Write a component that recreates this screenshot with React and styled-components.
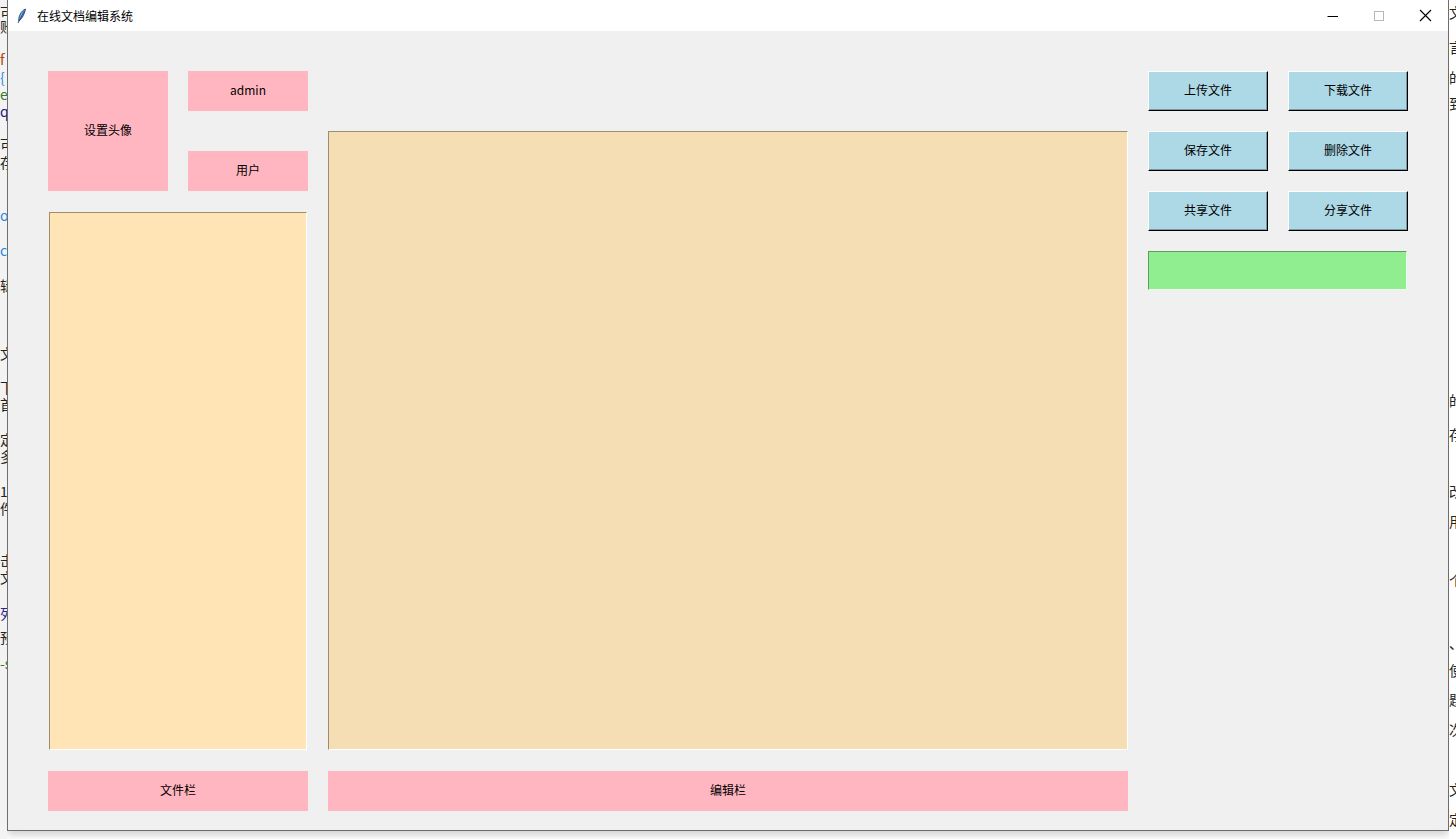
import React from "react";
import styled, { createGlobalStyle } from "styled-components";

const Global = createGlobalStyle`
  html, body { margin: 0; padding: 0; background: #ffffff; }
  body { font-family: "Noto Sans CJK SC", "Noto Sans", sans-serif; }
  #root { width: 1456px; height: 839px; overflow: hidden; }
`;

const Desktop = styled.div`
  display: flex;
  width: 1456px;
  height: 839px;
  background: #ffffff;
`;

const SideStrip = styled.div`
  width: ${(p) => p.$w}px;
  flex-shrink: 0;
  height: 839px;
  overflow: hidden;
  background: ${(p) => p.$bg};
  position: relative;
  font-family: "Noto Sans CJK SC", sans-serif;
  font-size: 14px;
  line-height: 14px;
`;

const Glyph = styled.div`
  position: absolute;
  left: ${(p) => p.$x}px;
  top: ${(p) => p.$y}px;
  color: ${(p) => p.$c || "#222"};
  white-space: nowrap;
`;

const Window = styled.div`
  width: 1440px;
  height: 830px;
  flex-shrink: 0;
  border: 1px solid #6e6e6e;
  border-top: none;
  display: flex;
  flex-direction: column;
  background: #f0f0f0;
  box-shadow: 0 4px 8px rgba(0, 0, 0, 0.18);
`;

const TitleBar = styled.div`
  height: 31px;
  background: #ffffff;
  display: flex;
  align-items: center;
  flex-shrink: 0;
`;

const TitleIcon = styled.div`
  width: 20px;
  padding-left: 9px;
  display: flex;
  align-items: center;
`;

const TitleText = styled.div`
  font-size: 12px;
  line-height: 1;
  color: #000;
  flex: 1;
`;

const Controls = styled.div`
  display: flex;
  height: 31px;
`;

const CtrlBtn = styled.div`
  width: 46px;
  height: 31px;
  display: flex;
  align-items: center;
  justify-content: center;
`;

const Content = styled.div`
  flex: 1;
  display: flex;
  padding: 40px 0 0 40px;
  gap: 20px;
`;

const Column = styled.div`
  display: flex;
  flex-direction: column;
  width: ${(p) => p.$w}px;
`;

const TopRow = styled.div`
  display: flex;
  gap: 20px;
`;

const Stack = styled.div`
  display: flex;
  flex-direction: column;
  gap: 40px;
`;

const PinkLabel = styled.div`
  width: ${(p) => p.$w}px;
  height: ${(p) => p.$h}px;
  box-sizing: border-box;
  padding-bottom: 2px;
  background: #ffb6c1;
  display: flex;
  align-items: center;
  justify-content: center;
  font-size: 12px;
  line-height: 1;
  color: #000;
  flex-shrink: 0;
`;

const ListBox = styled.div`
  width: 258px;
  height: 538px;
  margin: 21px 0 21px 1px;
  box-sizing: border-box;
  background: #ffe4b5;
  border-top: 1px solid #a08c6c;
  border-left: 1px solid #a08c6c;
  border-right: 1px solid #ffffff;
  border-bottom: 1px solid #ffffff;
`;

const Editor = styled.div`
  width: 800px;
  height: 619px;
  margin: 60px 0 21px 0;
  box-sizing: border-box;
  background: #f5deb3;
  border-top: 1px solid #9c8c70;
  border-left: 1px solid #9c8c70;
  border-right: 1px solid #ffffff;
  border-bottom: 1px solid #ffffff;
`;

const ButtonGrid = styled.div`
  display: grid;
  grid-template-columns: 120px 120px;
  column-gap: 20px;
  row-gap: 20px;
`;

const BlueButton = styled.div`
  width: 120px;
  height: 40px;
  box-sizing: border-box;
  padding-bottom: 2px;
  background: #add8e6;
  border-top: 1px solid #ffffff;
  border-left: 1px solid #ffffff;
  border-right: 1px solid #000000;
  border-bottom: 1px solid #000000;
  box-shadow: inset -1px -1px 0 #7a98a2;
  display: flex;
  align-items: center;
  justify-content: center;
  font-size: 12px;
  line-height: 1;
  color: #000;
`;

const GreenEntry = styled.div`
  width: 259px;
  height: 39px;
  margin-top: 20px;
  box-sizing: border-box;
  background: #90ee90;
  border-top: 1px solid #5f9c5f;
  border-left: 1px solid #5f9c5f;
  border-right: 1px solid #e6ffe6;
  border-bottom: 1px solid #e6ffe6;
`;

const leftGlyphs = [
  { y: 5, t: "可" },
  { y: 19, t: "账" },
  { y: 52, t: "f", c: "#b5400a" },
  { y: 70, t: "{", c: "#1e88e5" },
  { y: 87, t: "e", c: "#2e7d32" },
  { y: 104, t: "q", c: "#0d1a8c" },
  { y: 137, t: "可" },
  { y: 155, t: "存" },
  { y: 208, t: "o", c: "#1e88e5" },
  { y: 243, t: "c", c: "#1e88e5" },
  { y: 278, t: "辑" },
  { y: 346, t: "文" },
  { y: 380, t: "下" },
  { y: 397, t: "首" },
  { y: 432, t: "定" },
  { y: 449, t: "多" },
  { y: 484, t: "1" },
  { y: 501, t: "件" },
  { y: 553, t: "击" },
  { y: 570, t: "文" },
  { y: 606, t: "列", c: "#2a2a8c" },
  { y: 630, t: "预" },
  { y: 656, t: "-s", c: "#2e7d32" },
];

const rightGlyphs = [
  { y: 5, t: "文" },
  { y: 40, t: "言" },
  { y: 70, t: "的" },
  { y: 96, t: "到" },
  { y: 393, t: "的" },
  { y: 427, t: "存" },
  { y: 484, t: "改" },
  { y: 514, t: "用" },
  { y: 573, t: "个" },
  { y: 636, t: "、" },
  { y: 663, t: "使" },
  { y: 692, t: "题" },
  { y: 722, t: "次" },
  { y: 782, t: "文" },
  { y: 812, t: "定" },
];

function Feather() {
  return (
    <svg width="10" height="16" viewBox="0 0 10 16">
      <path d="M8.5 1 C4 3 1.5 8 1.8 13 C4 11.5 7 8 8.5 1 Z" fill="#7aa6d8" stroke="#1d3f7a" strokeWidth="0.9" />
      <path d="M7.5 3 L1 15" stroke="#1d3f7a" strokeWidth="0.9" />
    </svg>
  );
}

export default function App() {
  return (
    <>
      <Global />
      <Desktop>
        <SideStrip $w={7} $bg="#f3f3f3">
          {leftGlyphs.map((g, i) => (
            <Glyph key={i} $x={0} $y={g.y} $c={g.c}>{g.t}</Glyph>
          ))}
        </SideStrip>
        <Window>
          <TitleBar>
            <TitleIcon><Feather /></TitleIcon>
            <TitleText>在线文档编辑系统</TitleText>
            <Controls>
              <CtrlBtn>
                <svg width="12" height="12" viewBox="0 0 12 12">
                  <path d="M0.5 6.5 H11" stroke="#000" strokeWidth="1" />
                </svg>
              </CtrlBtn>
              <CtrlBtn>
                <svg width="12" height="12" viewBox="0 0 12 12">
                  <rect x="1.5" y="1.5" width="9" height="9" fill="none" stroke="#b8b8b8" strokeWidth="1" />
                </svg>
              </CtrlBtn>
              <CtrlBtn>
                <svg width="13" height="13" viewBox="0 0 13 13">
                  <path d="M1 1 L12 12 M12 1 L1 12" stroke="#000" strokeWidth="1.1" />
                </svg>
              </CtrlBtn>
            </Controls>
          </TitleBar>
          <Content>
            <Column $w={260}>
              <TopRow>
                <PinkLabel $w={120} $h={120}>设置头像</PinkLabel>
                <Stack>
                  <PinkLabel $w={120} $h={40}>admin</PinkLabel>
                  <PinkLabel $w={120} $h={40}>用户</PinkLabel>
                </Stack>
              </TopRow>
              <ListBox />
              <PinkLabel $w={260} $h={40}>文件栏</PinkLabel>
            </Column>
            <Column $w={800}>
              <Editor />
              <PinkLabel $w={800} $h={40}>编辑栏</PinkLabel>
            </Column>
            <Column $w={260}>
              <ButtonGrid>
                <BlueButton>上传文件</BlueButton>
                <BlueButton>下载文件</BlueButton>
                <BlueButton>保存文件</BlueButton>
                <BlueButton>删除文件</BlueButton>
                <BlueButton>共享文件</BlueButton>
                <BlueButton>分享文件</BlueButton>
              </ButtonGrid>
              <GreenEntry />
            </Column>
          </Content>
        </Window>
        <SideStrip $w={7} $bg="#ffffff">
          {rightGlyphs.map((g, i) => (
            <Glyph key={i} $x={0} $y={g.y} $c={g.c}>{g.t}</Glyph>
          ))}
        </SideStrip>
      </Desktop>
    </>
  );
}
